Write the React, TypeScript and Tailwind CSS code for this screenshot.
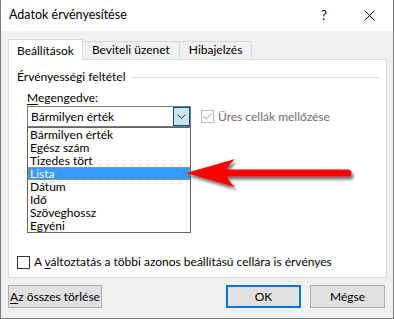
import React from "react";

const items = ["Bármilyen érték", "Egész szám", "Tizedes tört", "Lista", "Dátum", "Idő", "Szöveghossz", "Egyéni"];

export default function App() {
  return (
    <div
      className="relative w-[394px] h-[319px] bg-[#f0f0f0] border-l border-r border-b border-[#7a7a7a] flex flex-col text-[12px] text-black overflow-hidden whitespace-nowrap"
      style={{ fontFamily: 'Lato, "Noto Sans", sans-serif' }}
    >
      {/* title bar */}
      <div className="h-[31px] bg-white flex items-center pl-[8px] shrink-0">
        <span className="flex-1 leading-none text-[12.5px]">Adatok érvényesítése</span>
        <span className="w-[20px] text-center text-[13px] leading-none mr-[30px]">?</span>
        <svg width="11" height="11" viewBox="0 0 11 11" className="mr-[18px]">
          <path d="M0.5 0.5 L10.5 10.5 M10.5 0.5 L0.5 10.5" stroke="#000" strokeWidth="1" />
        </svg>
      </div>

      <div className="flex flex-col px-[7px] pt-[7px] flex-1">
        {/* tabs */}
        <div className="flex items-end h-[21px]">
          <div className="relative z-10 h-[21px] -mb-px px-[8px] pt-[3px] bg-white border border-b-0 border-[#d9d9d9] leading-[15px]">
            Beállítások
          </div>
          <div className="h-[18px] -ml-px px-[9px] bg-[#f0f0f0] border border-b-0 border-[#d9d9d9] leading-[16px]">
            Beviteli üzenet
          </div>
          <div className="h-[18px] -ml-px px-[9px] bg-[#f0f0f0] border border-b-0 border-[#d9d9d9] leading-[16px]">
            Hibajelzés
          </div>
        </div>

        {/* panel */}
        <div className="w-[379px] h-[219px] bg-white border border-[#d9d9d9] flex flex-col pl-[8px] pt-[9px]">
          <div className="flex items-center gap-[6px] pr-[7px]">
            <span className="leading-[16px]">Érvényességi feltétel</span>
            <div className="flex-1 h-px bg-[#dcdcdc]" />
          </div>
          <div className="ml-[10px] mt-[5px] leading-[16px]">
            <span className="underline underline-offset-2">M</span>egengedve:
          </div>
          <div className="flex items-center ml-[10px] mt-0">
            <div className="relative">
              <div className="w-[164px] h-[21px] border border-[#7a7a7a] bg-white flex items-center">
                <span className="flex-1 pl-[3px] leading-none">Bármilyen érték</span>
                <div className="w-[17px] h-[19px] bg-[#cce4f7] border border-[#005499] flex items-center justify-center">
                  <svg width="9" height="5" viewBox="0 0 9 5">
                    <path d="M0.5 0.5 L4.5 4.5 L8.5 0.5" stroke="#333" fill="none" strokeWidth="1" />
                  </svg>
                </div>
              </div>
              <div className="absolute left-0 top-[21px] z-20 w-[164px] bg-white border border-[#646464] flex flex-col py-0">
                {items.map((it) =>
                  it === "Lista" ? (
                    <div
                      key={it}
                      className="h-[13px] leading-[13px] pl-[2px] bg-[#3399ff] text-white outline outline-1 outline-dotted outline-[#e0882f] -outline-offset-1"
                    >
                      {it}
                    </div>
                  ) : (
                    <div key={it} className="h-[13px] leading-[13px] pl-[2px]">
                      {it}
                    </div>
                  )
                )}
              </div>
            </div>
            <div className="flex items-center ml-[10px]">
              <div className="w-[13px] h-[13px] border border-[#bcbcbc] bg-white flex items-center justify-center">
                <svg width="9" height="7" viewBox="0 0 9 7">
                  <path d="M0.5 3.5 L3.2 6 L8.5 0.5" stroke="#bcbcbc" fill="none" strokeWidth="1.2" />
                </svg>
              </div>
              <span className="ml-[4px] text-[#6d6d6d] leading-none">Üres cellák mellőzése</span>
            </div>
          </div>

          <div className="flex-1" />
          <div className="flex items-center mb-[7px]">
            <div className="w-[13px] h-[13px] border border-[#333] bg-white" />
            <span className="ml-[4px] leading-[16px]">
              A <span className="underline underline-offset-2">v</span>áltoztatás a többi azonos beállítású cellára is érvényes
            </span>
          </div>
        </div>

        {/* buttons */}
        <div className="flex items-center mt-[7px]">
          <div className="w-[94px] h-[23px] bg-[#e1e1e1] border border-[#adadad] flex items-center justify-center leading-none">
            <span>
              <span className="underline underline-offset-2">A</span>z összes törlése
            </span>
          </div>
          <div className="flex-1" />
          <div className="w-[75px] h-[23px] bg-[#e1e1e1] border-2 border-[#0078d7] flex items-center justify-center leading-none">
            OK
          </div>
          <div className="w-[75px] h-[23px] ml-[9px] mr-[1px] bg-[#e1e1e1] border border-[#adadad] flex items-center justify-center leading-none">
            Mégse
          </div>
        </div>
      </div>

      {/* red arrow overlay */}
      <svg className="absolute left-[180px] top-[150px] z-30" width="185" height="50" viewBox="0 0 185 50">
        <defs>
          <filter id="sh" x="-10%" y="-40%" width="130%" height="200%">
            <feDropShadow dx="2" dy="3" stdDeviation="1.8" floodColor="#000" floodOpacity="0.55" />
          </filter>
        </defs>
        <g filter="url(#sh)">
          <line x1="42" y1="23" x2="167" y2="23" stroke="#ff0000" strokeWidth="7" strokeLinecap="round" />
          <path d="M5 23 L54 9 Q46 16 45 23 Q46 30 54 37 Z" fill="#ff0000" />
        </g>
      </svg>
    </div>
  );
}
